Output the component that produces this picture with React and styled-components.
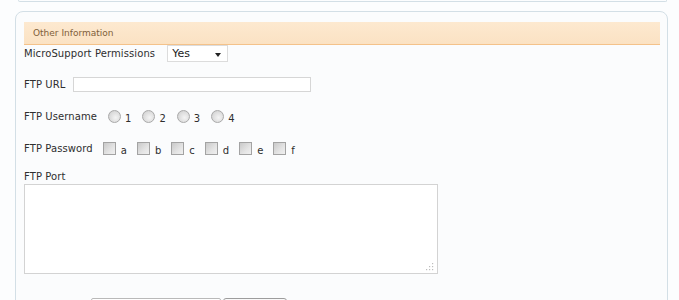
import React from 'react'
import styled, { createGlobalStyle } from 'styled-components'

const GlobalStyle = createGlobalStyle`
    body {
        margin: 0;
        background: #fcfdfe;
        font-family: 'DejaVu Sans', Verdana, sans-serif;
        color: #2e2e2e;
    }
`;

const Page = styled.div`
    padding: 0 11px 0 15px;
    height: 300px;
    overflow: hidden;
`;

const PrevPanel = styled.div`
    margin: 0 1px 0 3px;
    height: 1px;
    border: 1px solid #d3dfe6;
    border-top: none;
    border-radius: 0 0 6px 6px;
`;

const Panel = styled.div`
    margin-top: 9px;
    border: 1px solid #d3dfe6;
    border-radius: 8px;
    background: #fbfcfd;
    padding: 10px 7px 0 8px;
`;

const Header = styled.div`
    height: 22px;
    line-height: 22px;
    padding-left: 9px;
    font-size: 9px;
    color: #80603a;
    background: linear-gradient(#fde9d0, #fbe2c3);
    border-bottom: 1px solid #f4c28a;
`;

const Row = styled.div`
    display: flex;
    align-items: center;
    height: ${p => p.h || 17}px;
    margin-top: ${p => p.top || 0}px;
    font-size: 10px;
`;

const Label = styled.span`
    margin-right: ${p => p.gap || 10}px;
    white-space: nowrap;
    letter-spacing: 0.1px;
`;

const SelectWrap = styled.div`
    position: relative;
    width: 61px;
    height: 17px;
    box-sizing: border-box;
    border: 1px solid #dcdcdc;
    background: #fff;
    &::after {
        content: '';
        position: absolute;
        right: 6px;
        top: 7px;
        border-left: 3px solid transparent;
        border-right: 3px solid transparent;
        border-top: 4px solid #222;
    }
`;

const Select = styled.select`
    appearance: none;
    border: none;
    background: transparent;
    width: 100%;
    height: 100%;
    padding: 0 0 0 4px;
    font: 11px 'DejaVu Sans', Verdana, sans-serif;
    color: #222;
    outline: none;
`;

const TextInput = styled.input`
    width: 238px;
    height: 15px;
    box-sizing: border-box;
    border: 1px solid #d6d6d6;
    background: #fff;
    padding: 0 3px;
    font-size: 10px;
`;

const Option = styled.label`
    display: flex;
    align-items: center;
    margin-right: ${p => p.gap || 8}px;
`;

const Radio = styled.input.attrs({ type: 'radio' })`
    appearance: none;
    margin: 0 4px 0 0;
    width: 13px;
    height: 13px;
    border-radius: 50%;
    border: 1px solid #a9a9a9;
    background: radial-gradient(circle at 60% 60%, #f4f4f4 0, #dcdcdc 60%, #c8c8c8 100%);
    box-sizing: border-box;
`;

const Check = styled.input.attrs({ type: 'checkbox' })`
    appearance: none;
    margin: 0 5px 0 0;
    width: 13px;
    height: 13px;
    border: 1px solid #a3a3a3;
    background: linear-gradient(135deg, #c9c9c9, #e4e4e4 60%, #f0f0f0);
    box-sizing: border-box;
`;

const OptText = styled.span`
    position: relative;
    top: 2px;
`;

// textarea with the dotted grip drawn over its corner
const AreaWrap = styled.div`
    position: relative;
    width: 414px;
    margin-top: 1px;
`;

const TextArea = styled.textarea`
    display: block;
    width: 414px;
    height: 90px;
    box-sizing: border-box;
    border: 1px solid #d3d3d3;
    background: #fff;
    resize: none;
    font-size: 10px;
`;

const Grip = styled.svg`
    position: absolute;
    right: 4px;
    bottom: 3px;
`;

const Bottom = styled.div`
    display: flex;
    margin: 24px 0 0 67px;
    gap: 2px;
`;

const BottomInput = styled.input`
    width: 130px;
    height: 20px;
    box-sizing: border-box;
    border: 1px solid #b9b9b9;
    border-radius: 2px;
    background: #fff;
`;

const BottomButton = styled.button`
    width: 64px;
    height: 20px;
    border: 1px solid #9d9d9d;
    border-radius: 3px;
    background: linear-gradient(#fafafa, #e4e4e4);
`;

const usernames = ['1', '2', '3', '4'];
const passwords = ['a', 'b', 'c', 'd', 'e', 'f'];

const App = () => {
    return (
        <Page>
            <GlobalStyle />
            <PrevPanel />
            <Panel>
                <Header>Other Information</Header>
                <Row h={17} top={0}>
                    <Label gap={12}>MicroSupport Permissions</Label>
                    <SelectWrap>
                        <Select defaultValue='yes'>
                            <option value='yes'>Yes</option>
                            <option value='no'>No</option>
                        </Select>
                    </SelectWrap>
                </Row>
                <Row h={17} top={14}>
                    <Label gap={8}>FTP URL</Label>
                    <TextInput type='text' />
                </Row>
                <Row h={15} top={16}>
                    <Label gap={11}>FTP Username</Label>
                    {usernames.map(u => (
                        <Option key={u} gap={11}>
                            <Radio name='ftpuser' />
                            <OptText>{u}</OptText>
                        </Option>
                    ))}
                </Row>
                <Row h={15} top={17}>
                    <Label gap={10}>FTP Password</Label>
                    {passwords.map(p => (
                        <Option key={p} gap={10}>
                            <Check />
                            <OptText>{p}</OptText>
                        </Option>
                    ))}
                </Row>
                <Row h={14} top={13}>
                    <Label>FTP Port</Label>
                </Row>
                <AreaWrap>
                    <TextArea />
                    <Grip width='8' height='8' viewBox='0 0 8 8'>
                        <g fill='#bdbdbd'>
                            <rect x='6' y='0' width='1.2' height='1.2' />
                            <rect x='3' y='3' width='1.2' height='1.2' />
                            <rect x='6' y='3' width='1.2' height='1.2' />
                            <rect x='0' y='6' width='1.2' height='1.2' />
                            <rect x='3' y='6' width='1.2' height='1.2' />
                            <rect x='6' y='6' width='1.2' height='1.2' />
                        </g>
                    </Grip>
                </AreaWrap>
                <Bottom>
                    <BottomInput type='text' />
                    <BottomButton />
                </Bottom>
            </Panel>
        </Page>
    )
}

export default App
